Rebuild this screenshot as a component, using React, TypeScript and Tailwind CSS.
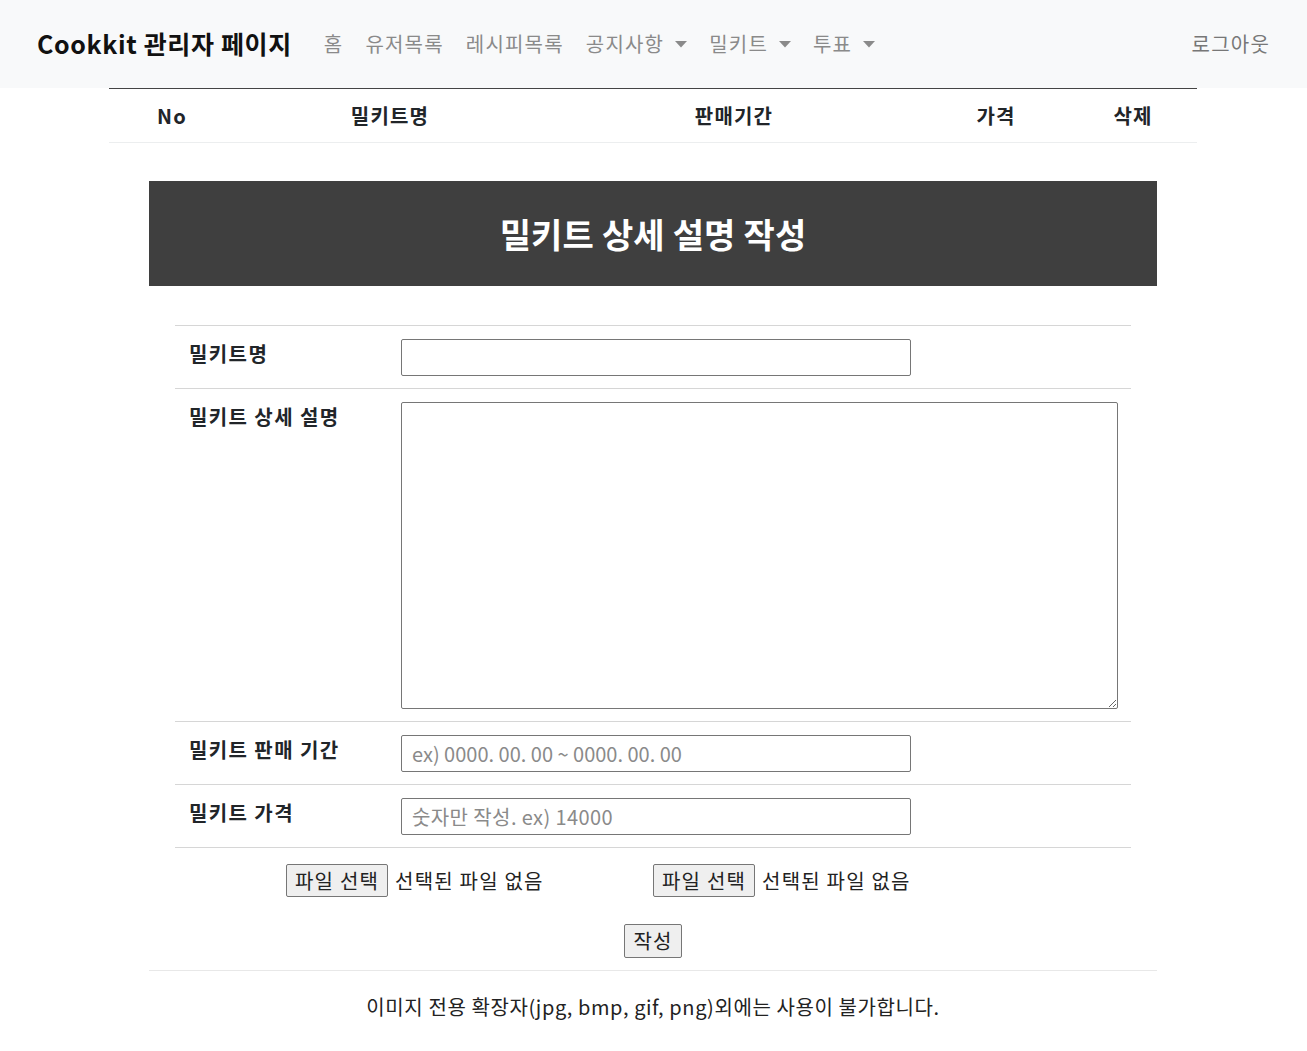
import React from "react";

const font = { fontFamily: '"Noto Sans CJK KR", "Noto Sans", sans-serif' };

function Caret() {
  return (
    <svg width="12" height="7" viewBox="0 0 12 7" className="ml-[11px] inline-block">
      <path d="M0 0 L12 0 L6 6.5 Z" fill="currentColor" />
    </svg>
  );
}

function Navbar() {
  const links: { label: string; caret?: boolean }[] = [
    { label: "홈" },
    { label: "유저목록" },
    { label: "레시피목록" },
    { label: "공지사항", caret: true },
    { label: "밀키트", caret: true },
    { label: "투표", caret: true },
  ];
  return (
    <nav className="flex h-[88px] items-center bg-[#f8f9fa] pl-[37px] pr-[37px]">
      <span className="mr-[32px] text-[25px] font-bold tracking-[0.025em] text-[#111]">Cookkit 관리자 페이지</span>
      <ul className="flex items-center gap-[22px] text-[20px] tracking-[0.06em] text-[#8a8a8a]">
        {links.map((l) => (
          <li key={l.label} className="flex items-center">
            {l.label}
            {l.caret && <Caret />}
          </li>
        ))}
      </ul>
      <span className="ml-auto text-[20px] tracking-[0.06em] text-[#777]">로그아웃</span>
    </nav>
  );
}

function ListHeader() {
  const cols = ["No", "밀키트명", "판매기간", "가격", "삭제"];
  return (
    <div className="ml-[109px] w-[1088px] border-t-[1.5px] border-[#444] border-b border-b-[#eceeef]">
      <div className="grid h-[53px] grid-cols-[126px_310px_378px_146px_128px] items-center text-[20px] font-bold tracking-[0.06em] text-[#212529]">
        {cols.map((c) => (
          <div key={c} className="text-center">
            {c}
          </div>
        ))}
      </div>
    </div>
  );
}

function Row({ label, children, tall }: { label: string; children: React.ReactNode; tall?: boolean }) {
  return (
    <div className="flex border-b border-[#d6d6d6]">
      <div
        className={`w-[212px] pl-[14px] pt-[13px] text-[20px] font-bold tracking-[0.07em] text-[#212529] ${tall ? "" : "h-[62px]"}`}
      >
        {label}
      </div>
      <div className="ml-[1px] flex-1 pl-[13px] pt-[13px] pb-[12px]">{children}</div>
    </div>
  );
}

function FilePick() {
  return (
    <div className="flex items-center text-[20px] tracking-[0.06em] text-[#222]">
      <span className="rounded-[2px] border border-[#767676] bg-[#efefef] px-[8px] leading-[31px]">파일 선택</span>
      <span className="ml-[7px]">선택된 파일 없음</span>
    </div>
  );
}

export default function App() {
  return (
    <div className="min-h-[1051px] bg-white" style={font}>
      <Navbar />
      <ListHeader />

      <div className="ml-[149px] mt-[38px] w-[1008px]">
        <div className="flex h-[105px] items-center justify-center bg-[#3f3f3f]">
          <h3 className="text-[34px] font-bold tracking-[0.005em] text-white">밀키트 상세 설명 작성</h3>
        </div>

        <div className="ml-[26px] mt-[39px] w-[956px] border-t border-[#d6d6d6]">
          <Row label="밀키트명">
            <input className="h-[37px] w-[510px] rounded-[2px] border border-[#767676] outline-none" />
          </Row>
          <Row label="밀키트 상세 설명" tall>
            <textarea className="block h-[307px] w-[717px] rounded-[2px] border border-[#767676] outline-none" />
          </Row>
          <Row label="밀키트 판매 기간">
            <input
              placeholder="ex) 0000. 00. 00 ~ 0000. 00. 00"
              className="h-[37px] w-[510px] rounded-[2px] border border-[#767676] px-[10px] text-[20px] placeholder:text-[#8a8a8a] outline-none"
            />
          </Row>
          <Row label="밀키트 가격">
            <input
              placeholder="숫자만 작성. ex) 14000"
              className="h-[37px] w-[510px] rounded-[2px] border border-[#767676] px-[10px] text-[20px] tracking-[0.02em] placeholder:text-[#8a8a8a] outline-none"
            />
          </Row>
        </div>

        <div className="mt-[16px] flex pl-[137px]">
          <div className="w-[367px]">
            <FilePick />
          </div>
          <FilePick />
        </div>

        <div className="mt-[27px] flex justify-center">
          <button className="rounded-[2px] border border-[#767676] bg-[#efefef] px-[8px] text-[20px] leading-[32px] tracking-[0.06em] text-[#222]">
            작성
          </button>
        </div>

        <hr className="mt-[12px] border-[#e8e8e8]" />

        <p className="mt-[21px] text-center text-[20px] tracking-[0.03em] text-[#222]">
          이미지 전용 확장자(jpg, bmp, gif, png)외에는 사용이 불가합니다.
        </p>
      </div>
    </div>
  );
}
